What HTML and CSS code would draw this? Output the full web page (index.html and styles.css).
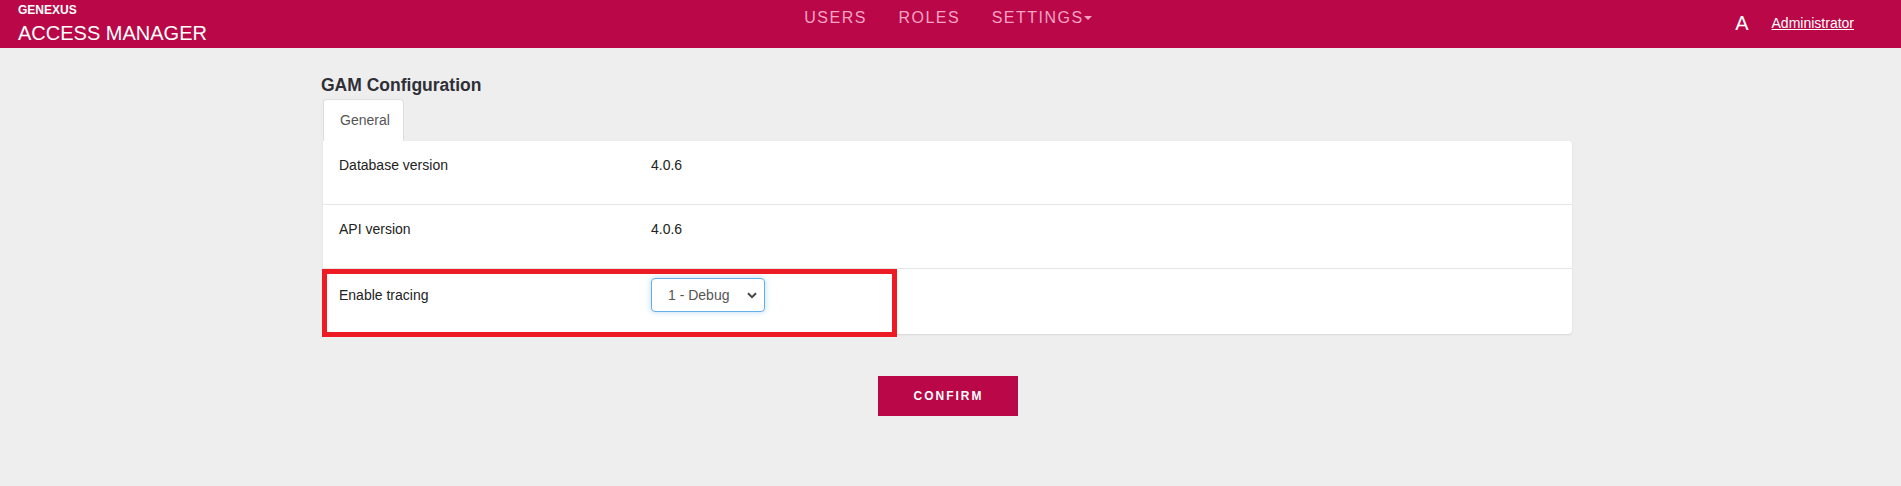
FILE: index.html
```html
<!DOCTYPE html>
<html lang="en">
<head>
<meta charset="utf-8">
<title>GAM Configuration</title>
<link rel="stylesheet" href="styles.css">
</head>
<body>
<header class="topbar">
  <div class="brand">
    <div class="brand-small">GENEXUS</div>
    <div class="brand-big">ACCESS MANAGER</div>
  </div>
  <nav class="nav">
    <a class="nav-link" href="#">USERS</a>
    <a class="nav-link" href="#">ROLES</a>
    <a class="nav-link" href="#">SETTINGS<span class="caret"></span></a>
  </nav>
  <div class="user">
    <span class="avatar">A</span>
    <a class="user-name" href="#">Administrator</a>
  </div>
</header>

<main class="page">
  <h1 class="title">GAM Configuration</h1>
  <div class="tabs">
    <div class="tab">General</div>
  </div>
  <section class="card">
    <div class="row">
      <div class="label">Database version</div>
      <div class="value">4.0.6</div>
    </div>
    <div class="row">
      <div class="label">API version</div>
      <div class="value">4.0.6</div>
    </div>
    <div class="row row-control">
      <div class="label">Enable tracing</div>
      <div class="value">
        <div class="select">
          <span class="select-text">1 - Debug</span>
          <svg class="chevron" width="10" height="7" viewBox="0 0 10 7"><path d="M1 1.2 L5 5.2 L9 1.2" fill="none" stroke="#444" stroke-width="2"/></svg>
        </div>
      </div>
      <div class="highlight"></div>
    </div>
  </section>
  <div class="actions">
    <button class="btn" type="button">CONFIRM</button>
  </div>
</main>
</body>
</html>
```
FILE: styles.css
```css
* { box-sizing: border-box; }

body {
  margin: 0;
  background: #eeeeee;
  font-family: "Liberation Sans", Arial, sans-serif;
  color: #222;
}

.topbar {
  display: grid;
  grid-template-columns: 1fr auto 1fr;
  height: 48px;
  background: #ba0747;
  padding: 0 18px;
  color: #fff;
}

.brand { padding-top: 3px; }
.brand-small {
  font-size: 12px;
  font-weight: bold;
  line-height: 14px;
}
.brand-big {
  margin-top: 4px;
  font-size: 20px;
  line-height: 24px;
}

.nav {
  display: flex;
  gap: 31.5px;
  padding-top: 8px;
  margin-right: 5px;
}
.nav-link {
  color: #f4a3c4;
  text-decoration: none;
  font-size: 16px;
  line-height: 20px;
  letter-spacing: 1.5px;
}
.caret {
  display: inline-block;
  vertical-align: middle;
  margin-left: 0;
  margin-top: -2px;
  border-top: 4px solid #f4a3c4;
  border-left: 4px solid transparent;
  border-right: 4px solid transparent;
}

.user {
  justify-self: end;
  display: flex;
  align-items: flex-start;
  gap: 23px;
  padding-top: 11px;
  padding-right: 29px;
}
.avatar {
  font-size: 20px;
  line-height: 24px;
}
.user-name {
  margin-top: 2px;
  color: #fff;
  font-size: 14px;
  line-height: 20px;
  text-decoration: underline;
}

.page {
  width: 1249px;
  margin-left: calc(50% - 627.5px);
  padding-top: 25px;
}

.title {
  margin: 0 0 2px -2px;
  font-size: 17.5px;
  line-height: 24px;
  font-weight: bold;
  color: #2f2f37;
}

.tabs { display: flex; }
.tab {
  background: #fff;
  border: 1px solid #dddddd;
  border-bottom: none;
  border-radius: 4px 4px 0 0;
  padding: 10px 13px 11px 16px;
  font-size: 14px;
  line-height: 20px;
  color: #555;
}

.card {
  background: #fff;
  border-radius: 0 4px 4px 4px;
  box-shadow: 0 1px 2px rgba(0, 0, 0, 0.1);
}

.row {
  position: relative;
  display: grid;
  grid-template-columns: 312px 1fr;
  padding: 14px 16px 29px;
  border-bottom: 1px solid #e6e6e6;
  font-size: 14px;
  line-height: 20px;
  color: #222;
}
.row-control {
  padding: 9px 16px 22px;
  align-items: center;
  border-bottom: none;
}

.select {
  display: flex;
  align-items: center;
  width: 114px;
  height: 34px;
  padding: 0 7px 0 16px;
  border: 1px solid #66afe9;
  border-radius: 4px;
  box-shadow: 0 0 6px rgba(102, 175, 233, 0.45);
  color: #555;
  background: #fff;
}
.chevron { margin-left: auto; }

.highlight {
  position: absolute;
  left: -1px;
  top: 0;
  width: 575px;
  height: 68px;
  border: 5px solid #ed1c24;
  pointer-events: none;
}

.actions {
  display: flex;
  justify-content: center;
  margin-top: 42px;
}
.btn {
  width: 140px;
  height: 40px;
  border: none;
  background: #ba0747;
  color: #fff;
  font-family: "Liberation Sans", Arial, sans-serif;
  font-size: 12px;
  font-weight: bold;
  letter-spacing: 2px;
  padding: 0 0 0 2px;
}
```
